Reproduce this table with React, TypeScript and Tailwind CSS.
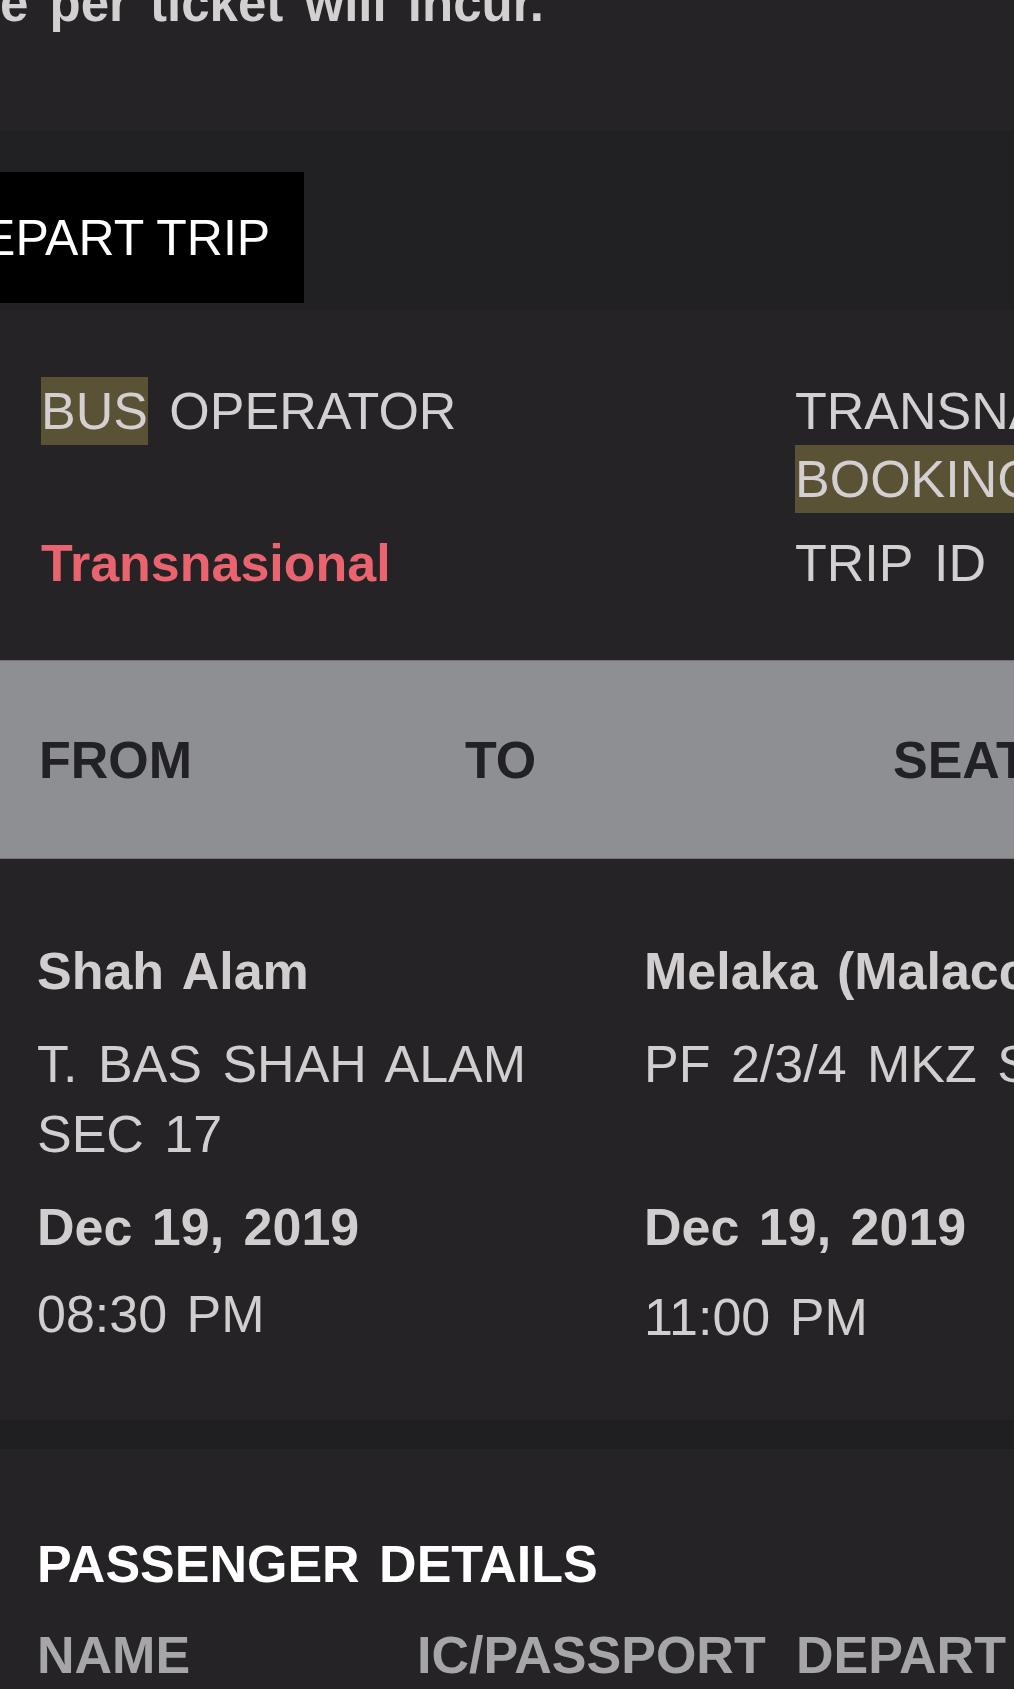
export default function App() {
  return (
    <div className="w-[1014px] h-[1689px] overflow-hidden bg-[#252325] font-['Liberation_Sans',Arial,sans-serif] [word-spacing:5px]">
      {/* Fee note (scrolled) */}
      <section className="flex h-[131px] flex-col">
        <p className="-mt-[27px] whitespace-nowrap text-[51px] font-bold leading-[62px] text-[#d4cfd0] [word-spacing:7px]">
          e per ticket will incur.
        </p>
      </section>

      {/* Trip label */}
      <section className="flex h-[179px] flex-col bg-[#212124] pt-[41px]">
        <div className="-ml-[88px] flex h-[131px] w-fit items-center bg-black px-[34px] [word-spacing:0px]">
          <span className="whitespace-nowrap text-[50px] leading-none text-white">DEPART TRIP</span>
        </div>
      </section>

      {/* Operator */}
      <section className="h-[350px] pt-[67px]">
        <div className="grid w-[1500px] grid-cols-[754px_700px] gap-y-[16px] pl-[41px] text-[52px] leading-[68px] text-[#d4cfd0] [word-spacing:7px]">
          <div className="whitespace-nowrap">
            <span className="inline-block bg-[#5a5235]">BUS</span> OPERATOR
          </div>
          <div className="whitespace-nowrap">
            TRANSNASIONAL
            <br />
            <span className="inline-block bg-[#5a5235] pr-[200px]">BOOKING</span> ID
          </div>
          <div className="whitespace-nowrap font-bold text-[#e9646e]">Transnasional</div>
          <div className="whitespace-nowrap">TRIP ID</div>
        </div>
      </section>

      {/* Table head */}
      <section className="grid h-[199px] w-[1500px] grid-cols-[426px_428px_1fr] items-center border-y border-[#727277] bg-[#8e8f93] pl-[39px] text-[52px] font-bold text-[#222226]">
        <span>FROM</span>
        <span>TO</span>
        <span className="whitespace-nowrap">SEAT</span>
      </section>

      {/* Route */}
      <section className="flex h-[561px] w-[1500px] flex-col pl-[37px] pt-[77px] text-[52px] text-[#d2cdce]">
        <div className="grid grid-cols-[607px_800px] font-bold leading-[70px]">
          <div>Shah Alam</div>
          <div className="whitespace-nowrap">Melaka (Malacca)</div>
        </div>
        <div className="mt-[23px] grid grid-cols-[607px_800px] leading-[70px] [word-spacing:6px]">
          <div className="pr-[60px]">T. BAS SHAH ALAM SEC 17</div>
          <div className="whitespace-nowrap">PF 2/3/4 MKZ SENTRAL</div>
        </div>
        <div className="mt-[23px] grid grid-cols-[607px_800px] font-bold leading-[70px]">
          <div>Dec 19, 2019</div>
          <div>Dec 19, 2019</div>
        </div>
        <div className="mt-[17px] grid grid-cols-[607px_800px] leading-[70px]">
          <div>08:30 PM</div>
          <div className="pt-[3px]">11:00 PM</div>
        </div>
      </section>

      <div className="h-[29px] bg-[#1f1f22]" />

      {/* Passengers */}
      <section className="flex w-[1500px] flex-col pl-[37px] pt-[80px] text-[52px] font-bold leading-[70px]">
        <h2 className="text-white">PASSENGER DETAILS</h2>
        <div className="mt-[21px] grid grid-cols-[380px_379px_1fr] text-[#a6a6a9]">
          <span>NAME</span>
          <span>IC/PASSPORT</span>
          <span className="whitespace-nowrap">DEPART</span>
        </div>
      </section>
    </div>
  )
}
